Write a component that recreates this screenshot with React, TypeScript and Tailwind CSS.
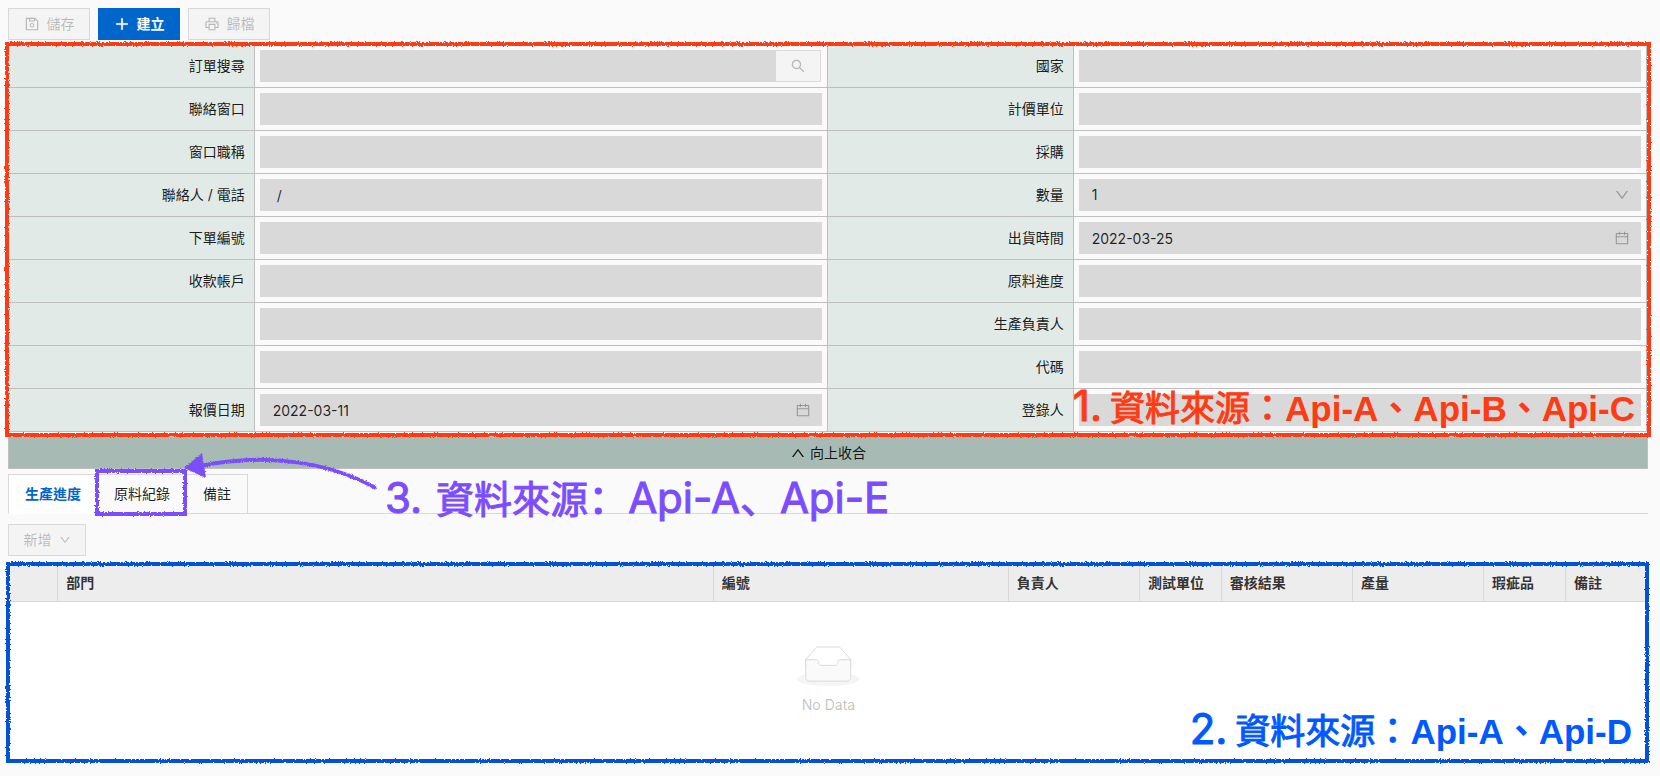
import { useId, type ReactNode } from "react";
import {
  AiOutlineCalendar,
  AiOutlineDown,
  AiOutlinePlus,
  AiOutlinePrinter,
  AiOutlineSave,
  AiOutlineSearch,
  AiOutlineUp,
} from "react-icons/ai";

type FieldKind = "text" | "search" | "date" | "select";

interface FieldSpec {
  label: string;
  name?: string;
  kind?: FieldKind;
  value?: string;
}

const fields: FieldSpec[] = [
  { label: "訂單搜尋", kind: "search" },
  { label: "國家" },
  { label: "聯絡窗口" },
  { label: "計價單位" },
  { label: "窗口職稱" },
  { label: "採購" },
  { label: "聯絡人 / 電話", value: " / " },
  { label: "數量", kind: "select", value: "1" },
  { label: "下單編號" },
  { label: "出貨時間", kind: "date", value: "2022-03-25" },
  { label: "收款帳戶" },
  { label: "原料進度" },
  { label: "", name: "備用一" },
  { label: "生產負責人" },
  { label: "", name: "備用二" },
  { label: "代碼" },
  { label: "報價日期", kind: "date", value: "2022-03-11" },
  { label: "登錄人" },
];

const columns = [
  { title: "", width: "w-[3%]" },
  { title: "部門", width: "w-[40%]" },
  { title: "編號", width: "w-[18%]" },
  { title: "負責人", width: "w-[8%]" },
  { title: "測試單位", width: "w-[5%]" },
  { title: "審核結果", width: "w-[8%]" },
  { title: "產量", width: "w-[8%]" },
  { title: "瑕疵品", width: "w-[5%]" },
  { title: "備註", width: "w-[5%]" },
];

const inputClass =
  "h-8 w-full min-w-0 appearance-none rounded-none bg-[#d9d9d9] px-[13px] text-sm text-black/85 outline-none";

function ControlIcon({ children }: { children: ReactNode }) {
  return (
    <span className="pointer-events-none absolute inset-y-0 right-[11px] flex items-center text-base text-black/30">
      {children}
    </span>
  );
}

function Field({ label, name, kind = "text", value = "" }: FieldSpec) {
  const id = useId();
  let control: ReactNode;
  if (kind === "search") {
    control = (
      <div className="flex w-full pr-px">
        <input id={id} className={inputClass} readOnly />
        <button
          type="button"
          aria-label="搜尋"
          disabled
          className="flex h-8 w-[46px] shrink-0 items-center justify-center border border-[#d9d9d9] bg-[#f4f4f4] text-base text-black/25"
        >
          <AiOutlineSearch />
        </button>
      </div>
    );
  } else if (kind === "select") {
    control = (
      <div className="relative w-full">
        <select id={id} defaultValue={value} className={inputClass}>
          <option>{value}</option>
        </select>
        <ControlIcon>
          <AiOutlineDown />
        </ControlIcon>
      </div>
    );
  } else if (kind === "date") {
    control = (
      <div className="relative w-full">
        <input id={id} defaultValue={value} className={inputClass} />
        <ControlIcon>
          <AiOutlineCalendar />
        </ControlIcon>
      </div>
    );
  } else {
    control = (
      <input
        id={id}
        aria-label={name}
        defaultValue={value}
        className={inputClass}
      />
    );
  }
  return (
    <>
      <label
        htmlFor={id}
        className="flex items-center justify-end border-r border-b border-[#bfbfbf] bg-[#e1eae6] px-[9px] text-sm text-black/90"
      >
        {label}
      </label>
      <div className="flex border-r border-b border-[#bfbfbf] p-[5px]">
        {control}
      </div>
    </>
  );
}

/* Shared crayon-like edge used by every marker stroke. */
function CrayonFilter() {
  return (
    <svg width="0" height="0" className="absolute" aria-hidden="true">
      <filter
        id="crayon"
        filterUnits="userSpaceOnUse"
        x="-10"
        y="-10"
        width="4000"
        height="1000"
        colorInterpolationFilters="sRGB"
      >
        <feTurbulence
          type="fractalNoise"
          baseFrequency="0.8"
          numOctaves="2"
          seed="4"
          result="noise"
        />
        <feDisplacementMap
          in="SourceGraphic"
          in2="noise"
          scale="3"
          xChannelSelector="R"
          yChannelSelector="G"
        />
      </filter>
    </svg>
  );
}

function Marker({ className }: { className: string }) {
  return (
    <div className={`pointer-events-none absolute z-10 ${className}`}>
      <svg className="size-full overflow-visible" aria-hidden="true">
        <rect
          width="100%"
          height="100%"
          fill="none"
          stroke="currentColor"
          strokeWidth="4"
          filter="url(#crayon)"
        />
      </svg>
    </div>
  );
}

function EmptyIcon() {
  return (
    <svg height="40" viewBox="0 0 64 41" aria-hidden="true">
      <g transform="translate(0 1)" fill="none" fillRule="evenodd">
        <ellipse fill="#f5f5f5" cx="32" cy="33" rx="32" ry="7" />
        <g fillRule="nonzero" stroke="#d9d9d9">
          <path d="M55 12.76L44.854 1.258C44.367.474 43.656 0 42.907 0H21.093c-.749 0-1.46.474-1.947 1.257L9 12.761V22h46v-9.24z" />
          <path
            d="M41.613 15.931c0-1.605.994-2.93 2.227-2.931H55v18.137C55 33.26 53.68 35 52.05 35h-40.1C10.32 35 9 33.259 9 31.137V13h11.16c1.233 0 2.227 1.323 2.227 2.928v.022c0 1.605 1.005 2.901 2.237 2.901h14.752c1.232 0 2.237-1.308 2.237-2.913v-.007z"
            fill="#fafafa"
          />
        </g>
      </g>
    </svg>
  );
}

const buttonClass =
  "flex h-8 items-center justify-center gap-[7px] border text-sm";
const disabledButton = `${buttonClass} border-[#d9d9d9] bg-[#f4f4f4] text-black/25`;
const tabClass =
  "h-10 border border-[#d9d9d9] px-4 text-sm whitespace-nowrap";

/* Regular weight thickened to a medium. */
const mediumInk = "font-normal [-webkit-text-stroke:1px_currentColor]";

const hansPunctuation = "font-['Noto_Sans_CJK_SC',sans-serif] text-[40px]";

export default function App() {
  return (
    <main className="min-h-screen bg-[#fafafa] pt-2 pr-3 pb-4 pl-2 font-['Inter','Noto_Sans_CJK_TC',sans-serif] text-sm">
      <CrayonFilter />

      <div className="flex gap-2">
        <button type="button" disabled className={`min-w-[82px] ${disabledButton}`}>
          <AiOutlineSave className="text-base" />
          儲存
        </button>
        <button
          type="button"
          className={`min-w-[82px] border-[#0066cc] bg-[#0066cc] font-bold text-white ${buttonClass}`}
        >
          <AiOutlinePlus className="text-base" strokeWidth="40" />
          建立
        </button>
        <button type="button" disabled className={`min-w-[82px] ${disabledButton}`}>
          <AiOutlinePrinter className="text-base" />
          歸檔
        </button>
      </div>

      <section className="relative mt-1 mr-px">
        <form className="grid grid-cols-[3fr_7fr_3fr_7fr] border-t border-l border-[#bfbfbf]">
          {fields.map((field, index) => (
            <Field key={index} {...field} />
          ))}
        </form>
        <Marker className="top-0 -right-[2px] -bottom-[3px] -left-px text-[#ff3b14]" />
        <p className="pointer-events-none absolute right-3 bottom-[2px] z-10 flex items-baseline text-[35px] leading-[43px] font-bold whitespace-nowrap text-[#ff3b14] font-['Liberation_Sans','Noto_Sans_CJK_TC',sans-serif]">
          <span className={`mr-2 font-['Inter',sans-serif] text-[42px] ${mediumInk}`}>
            1.
          </span>
          <span className={mediumInk}>資料來源：</span>
          Api-A、Api-B、Api-C
        </p>
      </section>

      <button
        type="button"
        className="mt-1 flex h-[33px] w-full items-center justify-center gap-1 border border-[#bfbfbf] bg-[#a7bbb4] text-sm text-black/90"
      >
        <AiOutlineUp className="text-base" />
        向上收合
      </button>

      <div className="relative mt-[5px]">
        <div role="tablist" className="flex border-b border-[#d9d9d9]">
          <button
            type="button"
            role="tab"
            aria-selected="true"
            className={`${tabClass} -mb-px border-b-white bg-white font-bold text-[#0066cc]`}
          >
            生產進度
          </button>
          <div className="relative -mb-px -ml-px">
            <button
              type="button"
              role="tab"
              aria-selected="false"
              className={`${tabClass} text-black/90`}
            >
              原料紀錄
            </button>
            <Marker className="-top-[3px] right-[2px] bottom-0 left-0 text-[#7c4dff]" />
          </div>
          <button
            type="button"
            role="tab"
            aria-selected="false"
            className={`${tabClass} -mb-px -ml-px text-black/90`}
          >
            備註
          </button>
        </div>
        <svg
          className="pointer-events-none absolute -top-6 left-[170px] z-10 overflow-visible text-[#7c4dff]"
          width="206"
          height="44"
          viewBox="178 450 206 44"
          aria-hidden="true"
        >
          <g filter="url(#crayon)">
            <path
              d="M376 488C330 463 270 452 200 466"
              fill="none"
              stroke="currentColor"
              strokeWidth="4"
            />
            <path d="M184 468L202 453L206 478Z" fill="currentColor" />
          </g>
        </svg>
        <p
          className={`pointer-events-none absolute -top-px left-[377px] z-10 flex items-baseline text-[42px] leading-[46px] whitespace-nowrap text-[#7c4dff] ${mediumInk}`}
        >
          3.
          <span className="ml-[14px] font-['Noto_Sans_CJK_TC',sans-serif] text-[38px]">
            資料來源
          </span>
          <span lang="zh-Hans" className={hansPunctuation}>
            ：
          </span>
          Api-A
          <span lang="zh-Hans" className={hansPunctuation}>
            、
          </span>
          Api-E
        </p>
      </div>

      <button
        type="button"
        disabled
        className={`mt-[10px] min-w-[78px] ${disabledButton}`}
      >
        新增
        <AiOutlineDown className="text-xs" />
      </button>

      <section className="relative mt-2">
        <table className="w-full table-fixed border-separate border-spacing-0 border border-r-0 border-[#d9d9d9] bg-white">
          <thead>
            <tr className="h-[37px] bg-[#ededed]">
              {columns.map((column, index) => (
                <th
                  key={index}
                  scope="col"
                  className={`${column.width} border-r border-b border-[#d9d9d9] px-2 text-left text-sm font-bold whitespace-nowrap text-black/80`}
                >
                  {column.title}
                </th>
              ))}
            </tr>
          </thead>
          <tbody>
            <tr>
              <td colSpan={columns.length} className="p-0">
                <div className="flex flex-col items-center gap-2 py-11 text-sm leading-[22px] text-black/25">
                  <EmptyIcon />
                  No Data
                </div>
              </td>
            </tr>
          </tbody>
        </table>
        <Marker className="top-0 right-px bottom-0 left-0 text-[#0052d9]" />
        <p className="pointer-events-none absolute right-4 bottom-[5px] z-10 flex items-baseline text-[35px] leading-[48px] font-bold whitespace-nowrap text-[#0059ff] font-['Liberation_Sans','Noto_Sans_CJK_TC',sans-serif]">
          <span className={`mr-2 font-['Inter',sans-serif] text-[42px] ${mediumInk}`}>
            2.
          </span>
          <span className={mediumInk}>資料來源：</span>
          Api-A、Api-D
        </p>
      </section>
    </main>
  );
}
